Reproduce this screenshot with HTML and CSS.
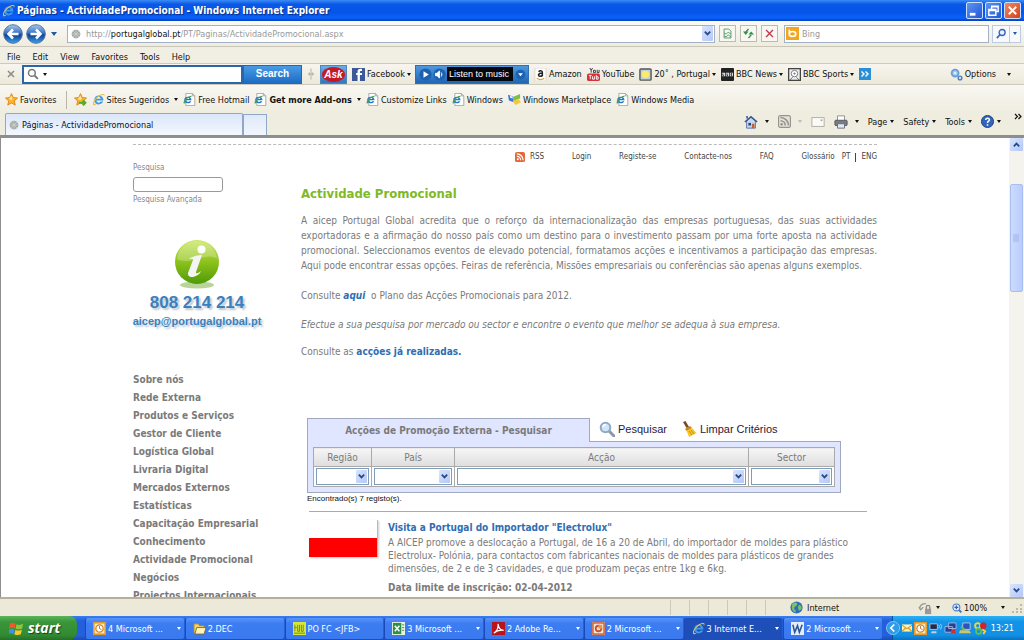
FILE: index.html
```html
<!DOCTYPE html>
<html lang="pt">
<head>
<meta charset="utf-8">
<title>Páginas - ActividadePromocional</title>
<link rel="stylesheet" href="styles.css">
</head>
<body>
<svg class="defs" aria-hidden="true">
  <defs>
    <linearGradient id="gGreen" x1="0" y1="0" x2="0" y2="1"><stop offset="0" stop-color="#c9e65a"/><stop offset=".5" stop-color="#8cc21c"/><stop offset="1" stop-color="#4f9a08"/></linearGradient>
    <linearGradient id="gNav" x1="0" y1="0" x2="0" y2="1"><stop offset="0" stop-color="#a9c8ee"/><stop offset=".45" stop-color="#3a72c4"/><stop offset=".55" stop-color="#123f93"/><stop offset="1" stop-color="#39a5ee"/></linearGradient>
    <symbol id="ie" viewBox="0 0 16 16"><path d="M14 9.300H5.500c.2 3 4 3.400 5.300 1.300h2.900C12 15.500 2.800 15.500 2.800 8.500 2.800 1.200 14.500 1.200 14 9.300zM5.500 7h5.300C10.400 4.300 5.900 4.300 5.500 7z" fill="#3f9bea"/><path d="M2 15C-2 11 9-.5 14.500 1.300 16 2 15.300 4 14.500 5c.3-1.500 0-2.400-1.200-2.400C9 2.600 2 10 2.500 13c.2 1 2 .8 3.200 0C4.500 14.800 3 15.600 2 15z" fill="#e9c04a"/></symbol>
    <symbol id="iedoc" viewBox="0 0 16 16"><path d="M3.500.5h8l3 3v12h-11z" fill="#fff" stroke="#9a9a9a"/><path d="M11.500.5v3h3" fill="none" stroke="#9a9a9a"/><path d="M10.500 9H4c.3 2.200 3 2.500 3.900 1h2.300C8.500 14 1.500 13.500 1.500 8.600c0-5.200 9.200-5.200 9 .4zM4 7.500h4C7.700 5.500 4.300 5.500 4 7.500z" fill="#2577c9"/><path d="M1 13C-1 10 7 2 11 3.500L10 5C7 4.500 2 9.500 3 12.500z" fill="#49a05a"/></symbol>
    <symbol id="globe" viewBox="0 0 16 16"><circle cx="8" cy="8" r="7" fill="#a5aaa5"/><path d="M1 8h14M8 1v14M3 3l10 10M13 3L3 13" fill="none" stroke="#d5d8d5" stroke-width="1"/></symbol>
    <symbol id="star" viewBox="0 0 16 16"><path d="M8 .8l2.200 4.800 5.200.6-3.900 3.500 1.100 5.200L8 12.300l-4.600 2.600 1.100-5.200L.6 6.200l5.200-.6z" fill="#fdb52b" stroke="#d77d10"/><path d="M8 3l1.300 3.500L8 9 5 7z" fill="#ffe795"/></symbol>
    <symbol id="chev" viewBox="0 0 10 10"><path d="M2 3l3 3 3-3" fill="none" stroke="#264a86" stroke-width="2"/></symbol>
    <symbol id="glass" viewBox="0 0 16 16"><path d="M10 10l5 5" stroke="#8b97a8" stroke-width="3" stroke-linecap="round"/><circle cx="6.500" cy="6.500" r="4.800" fill="#cfe6f8" stroke="#8fa9c4" stroke-width="2"/><path d="M4 6a3 3 0 013-2.500" stroke="#fff" stroke-width="1.500" fill="none"/></symbol>
    <symbol id="rss" viewBox="0 0 16 16"><circle cx="4.500" cy="11.500" r="1.600"/><path d="M3 7a6 6 0 016 6M3 3a10 10 0 0110 10" fill="none" stroke="currentColor" stroke-width="2"/></symbol>
    <symbol id="clock" viewBox="0 0 16 16"><rect width="16" height="16" rx="1" fill="#fbe9b8"/><rect x="1" y="1" width="14" height="14" fill="none" stroke="#e29a2f" stroke-width="2"/><circle cx="8" cy="8" r="4.500" fill="#fff" stroke="#d08020" stroke-width="1.500"/><path d="M8 5v3l2.500 1.500" fill="none" stroke="#a05c10"/></symbol>
  </defs>
</svg>

<header class="titlebar">
  <svg class="i12"><use href="#ie"/></svg>
  <h1 class="title">Páginas - ActividadePromocional - Windows Internet Explorer</h1>
  <div class="winbtns">
    <button class="wb" aria-label="Minimizar"><svg viewBox="0 0 16 16"><path d="M3 12h6" stroke="#fff" stroke-width="3"/></svg></button>
    <button class="wb" aria-label="Restaurar"><svg viewBox="0 0 16 16"><path d="M6 6V3.500h7V9h-2M3 7h7.500v6H3zM3 8h7M6 4h7" fill="none" stroke="#fff" stroke-width="1.500"/></svg></button>
    <button class="wb close" aria-label="Fechar"><svg viewBox="0 0 16 16"><path d="M4 4l8 8M12 4l-8 8" stroke="#fff" stroke-width="2"/></svg></button>
  </div>
</header>

<div class="addressrow">
  <button class="nav" aria-label="Voltar"><svg viewBox="0 0 20 20"><circle cx="10" cy="10" r="9.300" fill="url(#gNav)" stroke="#52749f"/><path d="M15.500 10H6M10 5.500L5.500 10l4.500 4.500" fill="none" stroke="#fff" stroke-width="2.500"/></svg></button>
  <button class="nav" aria-label="Avançar"><svg viewBox="0 0 20 20"><circle cx="10" cy="10" r="9.300" fill="url(#gNav)" stroke="#52749f"/><path d="M4.500 10H14M10 5.500l4.500 4.500-4.500 4.500" fill="none" stroke="#fff" stroke-width="2.500"/></svg></button>
  <span class="caret blue"></span>
  <div class="addr">
    <svg class="i10"><use href="#globe"/></svg>
    <span class="url">http://<b>portugalglobal.pt</b>/PT/Paginas/ActividadePromocional.aspx</span>
    <span class="dd"><svg><use href="#chev"/></svg></span>
  </div>
  <button class="sq" aria-label="Compatibilidade"><svg viewBox="0 0 16 16"><path d="M3 1.500h7l3 3v10H3zM3 7l3 2 3-3 4 3M3 11l3 2 3-3 4 3" fill="none" stroke="#4d9a62" stroke-width="1.300"/></svg></button>
  <button class="sq" aria-label="Atualizar"><svg viewBox="0 0 16 16"><path d="M8 1.500L4 6M8 14.500l4-4.500" fill="none" stroke="#2f9148" stroke-width="2"/><path d="M0 5h8L4 10zM16 9.500H8L12 5z" fill="#2f9148"/></svg></button>
  <button class="sq" aria-label="Parar"><svg viewBox="0 0 16 16"><path d="M3 3l10 10M13 3L3 13" stroke="#c23a4e" stroke-width="2"/></svg></button>
  <label class="bing"><svg viewBox="0 0 16 16"><rect width="16" height="16" fill="#f2a51f"/><path d="M4 3v7M4 8.500a4 3 0 118 0 4 3 0 11-8 0" fill="none" stroke="#fff" stroke-width="2"/></svg><input type="text" placeholder="Bing" aria-label="Bing"></label>
  <div class="go"><button aria-label="Procurar"><svg viewBox="0 0 16 16"><circle cx="9.500" cy="6" r="4" fill="#e6f0ff" stroke="#3465c0" stroke-width="1.800"/><path d="M6.500 9l-4 4.500" stroke="#3465c0" stroke-width="2.200"/></svg></button><button aria-label="Opções de procura"><span class="caret small-blue"></span></button></div>
</div>

<nav class="menubar"><button>File</button><button>Edit</button><button>View</button><button>Favorites</button><button>Tools</button><button>Help</button></nav>

<div class="toolbar">
  <button class="tx" aria-label="Fechar barra"><svg viewBox="0 0 10 10"><path d="M2 2l6 6M8 2L2 8" stroke="#8a8a8a" stroke-width="1.500"/></svg></button>
  <label class="askbox"><svg viewBox="0 0 16 16"><circle cx="6.500" cy="6.500" r="4.500" fill="none" stroke="#777" stroke-width="2"/><path d="M10 10l4.500 4.500" stroke="#777" stroke-width="2.500"/></svg><span class="caret"></span><input type="text" aria-label="Ask"></label>
  <button class="asksearch">Search</button>
  <svg class="grip" viewBox="0 0 10 16"><path d="M5 1v14M1 8h8M3 6v4M7 6v4" stroke="#a9a79d" fill="none"/></svg>
  <button class="asklogo"><span>Ask</span></button>
  <button class="tb"><svg class="i12" viewBox="0 0 14 14"><rect width="14" height="14" fill="#3b5998"/><path d="M8.500 14V7.500h2.300V5.300H8.500V4.200c0-.8.500-1 2.300-.9V1C7.500.6 6 1.500 6 4v1.300H4.500v2.200H6V14z" fill="#fff"/></svg>Facebook<span class="caret"></span></button>
  <div class="music"><svg viewBox="0 0 16 16"><circle cx="8" cy="8" r="7.500" fill="#1d61b1"/><path d="M5.500 4l6.500 4-6.500 4z" fill="#fff"/></svg><svg viewBox="0 0 16 16"><circle cx="8" cy="8" r="7.500" fill="#1d61b1"/><path d="M3 6.500h2l3-3v9l-3-3H3zM10 5.500c1.200 1.500 1.200 3.500 0 5" fill="#fff" stroke="#fff"/></svg><span>Listen to music</span><svg viewBox="0 0 16 16"><circle cx="8" cy="8" r="6" fill="#1d61b1"/><path d="M5 6.500h6L8 10z" fill="#fff"/></svg></div>
  <button class="tb"><svg class="i12" viewBox="0 0 14 14"><path d="M1 0h12v14H1z" fill="#fff" stroke="#d8d8d0"/><path d="M5 4c1-1.500 4-1.500 4 .5v4.500M9 5.500c-5 0-5 3.500-2.500 3.500C8 9 9 8 9 7" fill="none" stroke="#222" stroke-width="1.600"/><path d="M3 11c3 2 6 1.500 8 0" fill="none" stroke="#f19a20" stroke-width="1.300"/></svg>Amazon</button>
  <button class="tb"><svg class="i12" viewBox="0 0 14 14"><path d="M3 0l1.500 2.500L6 0M4.500 2.500V5M7 2.500h2V5H7zM11 2v3h2V2" fill="none" stroke="#333"/><rect y="6" width="14" height="8" rx="2" fill="#d9303a"/><path d="M2 8h3M3.500 8v4M6 9v3h2V9M10 7.500V12h2V9.500h-2" stroke="#fff" fill="none"/></svg>YouTube</button>
  <button class="tb"><svg class="i12" viewBox="0 0 14 14"><rect x="1" y="1" width="12" height="12" rx="1" fill="#b9d4e0" stroke="#555" stroke-width="1.500"/><circle cx="7" cy="7" r="4" fill="#ffe96b"/></svg>20˚ , Portugal<span class="caret"></span></button>
  <button class="tb"><svg class="i12" viewBox="0 0 14 14"><rect width="14" height="14" rx="1" fill="#222"/><path d="M1 5h3.500v4H1zM5.300 5h3.500v4H5.300zM9.600 5H13v4H9.600z" fill="#ddd"/><path d="M2 6v2h1M6.500 6v2h1M12 6h-1v2h1" stroke="#222" fill="none"/></svg>BBC News<span class="caret"></span></button>
  <button class="tb"><svg class="i12" viewBox="0 0 14 14"><rect x=".7" y=".7" width="12.600" height="12.600" fill="#eee" stroke="#444" stroke-width="1.400"/><circle cx="7" cy="6" r="3.500" fill="#fff" stroke="#777"/><path d="M7 4.500L8.500 6 7 7.500 5.500 6z" fill="#888"/><path d="M2 13l3-3M12 13L9 10" stroke="#666"/></svg>BBC Sports<span class="caret"></span></button>
  <button class="more" aria-label="Mais"><svg viewBox="0 0 12 12"><path d="M2.500 3.500L5 6 2.500 8.500M6.500 3.500L9 6 6.500 8.500" fill="none" stroke="#fff" stroke-width="1.400"/></svg></button>
  <button class="tb options"><svg class="i12" viewBox="0 0 14 14"><circle cx="5.500" cy="5.500" r="3.700" fill="#a9cdf0" stroke="#6b9fd6" stroke-width="2"/><circle cx="5.500" cy="5.500" r="1.200" fill="#eef6fd"/><circle cx="10.800" cy="10.800" r="2" fill="#d7e9fa" stroke="#4b7fbd" stroke-width="1.500"/></svg>Options<span class="caret wide"></span></button>
</div>

<nav class="favbar">
  <button class="tb"><svg class="i12"><use href="#star"/></svg>Favorites</button>
  <i class="sep"></i>
  <button class="tb" aria-label="Adicionar"><svg class="i12" viewBox="0 0 16 16"><use href="#star"/><path d="M6 12h8M11 9l3 3-3 3" fill="none" stroke="#4fae30" stroke-width="2.500"/></svg></button>
  <a class="fv" href="#"><svg class="i12"><use href="#ie"/></svg>Sites Sugeridos<span class="caret wide"></span></a>
  <a class="fv" href="#"><svg class="i12"><use href="#iedoc"/></svg>Free Hotmail</a>
  <a class="fv" href="#"><svg class="i12"><use href="#iedoc"/></svg><b>Get more Add-ons</b><span class="caret wide"></span></a>
  <a class="fv" href="#"><svg class="i12"><use href="#iedoc"/></svg>Customize Links</a>
  <a class="fv" href="#"><svg class="i12"><use href="#iedoc"/></svg>Windows</a>
  <a class="fv" href="#"><svg class="i12" viewBox="0 0 14 14"><path d="M0 2l6 2v6L1 8z" fill="#3f78d8"/><path d="M6 4l7-3v5L6 9z" fill="#7bc043"/><path d="M5 9l6-3 3 4-6 3z" fill="#f3c73f"/><path d="M2 3l3 1v2L2.500 5z" fill="#fff"/></svg>Windows Marketplace</a>
  <a class="fv" href="#"><svg class="i12"><use href="#iedoc"/></svg>Windows Media</a>
</nav>

<div class="tabrow">
  <button class="tab"><svg class="i10"><use href="#globe"/></svg>Páginas - ActividadePromocional</button>
  <button class="newtab" aria-label="Novo separador"></button>
  <div class="cmds">
    <button class="cm ic" aria-label="Página inicial"><svg class="i14" viewBox="0 0 16 16"><path d="M3 7v8h10V7L8 2.500z" fill="#c5d9f2" stroke="#4b6da2"/><path d="M1 8l7-6 7 6M3.500 4V1" fill="none" stroke="#39578a" stroke-width="1.800"/><path d="M9 10h3v5H9z" fill="#c6602f"/><path d="M5 9h3v3H5z" fill="#27477e"/></svg><span class="caret"></span></button>
    <button class="cm ic" aria-label="Feeds"><svg class="i12" viewBox="0 0 16 16"><rect x=".7" y=".7" width="14.600" height="14.600" rx="2" fill="#e4e2da" stroke="#96948c" stroke-width="1.400"/><g color="#96948c" fill="#96948c"><use href="#rss"/></g></svg><span class="caret dim"></span></button>
    <button class="cm" aria-label="Correio"><svg class="i14" viewBox="0 0 16 16"><rect x="1" y="3" width="14" height="10" fill="#fafaf7" stroke="#aaa89f"/><path d="M11 5h2v2h-2z" fill="#b8a090"/></svg></button>
    <button class="cm ic" aria-label="Imprimir"><svg class="i14" viewBox="0 0 16 16"><path d="M4 1h8v6H4z" fill="#fff" stroke="#888"/><rect x="1" y="6" width="14" height="6" rx="1" fill="#777b86" stroke="#555"/><path d="M4 10h8v5H4z" fill="#dfe8f5" stroke="#667"/></svg><span class="caret"></span></button>
    <button class="cm">Page<span class="caret"></span></button>
    <button class="cm">Safety<span class="caret"></span></button>
    <button class="cm">Tools<span class="caret"></span></button>
    <button class="cm" aria-label="Ajuda"><svg class="i12" viewBox="0 0 14 14"><circle cx="7" cy="7" r="6.500" fill="#3164bd" stroke="#173c80"/><path d="M5 5.500c0-3 4.500-2.500 4 0-.3 1.200-2 1.200-2 3M7 10v1.500" fill="none" stroke="#fff" stroke-width="1.600"/></svg><span class="caret"></span></button>
  </div>
  <svg class="over" viewBox="0 0 8 8"><path d="M1 1l2.500 2.500L1 6M4.500 1L7 3.500 4.500 6" fill="none" stroke="#111" stroke-width="1.200"/></svg>
</div>

<main class="viewport">
  <div class="scrollarea">
    <div class="page">
      <aside class="side">
        <label class="sl" for="q">Pesquisa</label>
        <input class="sq-in" id="q" type="text">
        <a class="adv" href="#">Pesquisa Avançada</a>
        <div class="contact">
          <svg class="info" viewBox="0 0 48 52"><ellipse cx="24" cy="47" rx="17" ry="3.500" fill="#a9c880" opacity=".8"/><circle cx="24" cy="24" r="22" fill="url(#gGreen)"/><path d="M4 21C6-3 42-3 44 21 34 13 18 28 4 21z" fill="#fff" opacity=".25"/><circle cx="28.500" cy="11.500" r="4" fill="#fff"/><path d="M17 20c4-2 8-3 12-3l-6 17c-.5 2 2 1.500 5-1-2 6-14 9-13 2l5-13c.4-1.500-2-1.500-4-1z" fill="#f4f4f4"/></svg>
          <strong class="phone">808 214 214</strong>
          <a class="mail" href="#">aicep@portugalglobal.pt</a>
        </div>
        <nav class="sidenav"><a href="#">Sobre nós</a><a href="#">Rede Externa</a><a href="#">Produtos e Serviços</a><a href="#">Gestor de Cliente</a><a href="#">Logística Global</a><a href="#">Livraria Digital</a><a href="#">Mercados Externos</a><a href="#">Estatísticas</a><a href="#">Capacitação Empresarial</a><a href="#">Conhecimento</a><a href="#">Actividade Promocional</a><a href="#">Negócios</a><a href="#">Projectos Internacionais</a></nav>
      </aside>
      <section class="content">
        <nav class="topnav">
          <a class="rss" href="#"><svg viewBox="0 0 16 16"><rect width="16" height="16" rx="3" fill="#e2683a"/><g color="#fff" fill="#fff"><use href="#rss"/></g></svg>RSS</a>
          <a href="#">Login</a><a href="#">Registe-se</a><a href="#">Contacte-nos</a><a href="#">FAQ</a>
          <span class="lang"><a href="#">Glossário</a><a href="#">PT</a><i></i><a href="#">ENG</a></span>
        </nav>
        <h2>Actividade Promocional</h2>
        <p class="intro">A aicep Portugal Global acredita que o reforço da internacionalização das empresas portuguesas, das suas actividades exportadoras e a afirmação do nosso país como um destino para o investimento passam por uma forte aposta na actividade promocional. Seleccionamos eventos de elevado potencial, formatamos acções e incentivamos a participação das empresas. Aqui pode encontrar essas opções. Feiras de referência, Missões empresariais ou conferências são apenas alguns exemplos.</p>
        <p class="line">Consulte <a class="lk it" href="#">aqui</a>&nbsp; o Plano das Acções Promocionais para 2012.</p>
        <p class="line em">Efectue a sua pesquisa por mercado ou sector e encontre o evento que melhor se adequa à sua empresa.</p>
        <p class="line">Consulte as <a class="lk" href="#">acções já realizadas.</a></p>

        <form class="finder">
          <div class="fhead">
            <h3>Acções de Promoção Externa - Pesquisar</h3>
            <button type="button" class="act"><svg><use href="#glass"/></svg>Pesquisar</button>
            <button type="button" class="act"><svg viewBox="0 0 16 16"><path d="M2 1l2.500-1L8 6 5.500 7z" fill="#7a4a22"/><path d="M4 8l5-3 2 2-5 3.500z" fill="#c9841c"/><path d="M5.500 9.500L11 7l4.500 5L8 16z" fill="#f6c526"/><path d="M8 10l3 4M10 9l3 4" stroke="#c98f10" fill="none"/></svg>Limpar Critérios</button>
          </div>
          <div class="fbody">
            <table>
              <thead><tr><th class="c1"><label for="s1">Região</label></th><th class="c2"><label for="s2">País</label></th><th><label for="s3">Acção</label></th><th class="c4"><label for="s4">Sector</label></th></tr></thead>
              <tbody><tr>
                <td><span class="sel"><select id="s1"><option></option></select><span class="dd"><svg><use href="#chev"/></svg></span></span></td>
                <td><span class="sel"><select id="s2"><option></option></select><span class="dd"><svg><use href="#chev"/></svg></span></span></td>
                <td><span class="sel"><select id="s3"><option></option></select><span class="dd"><svg><use href="#chev"/></svg></span></span></td>
                <td><span class="sel"><select id="s4"><option></option></select><span class="dd"><svg><use href="#chev"/></svg></span></span></td>
              </tr></tbody>
            </table>
          </div>
          <p class="found">Encontrado(s) 7 registo(s).</p>
        </form>
        <article class="item">
          <div class="flag"></div>
          <div>
            <h4><a href="#">Visita a Portugal do Importador "Electrolux"</a></h4>
            <p>A AICEP promove a deslocação a Portugal, de 16 a 20 de Abril, do importador de moldes para plástico Electrolux- Polónia, para contactos com fabricantes nacionais de moldes para plásticos de grandes dimensões, de 2 e de 3 cavidades, e que produzam peças entre 1kg e 6kg.</p>
            <strong>Data limite de inscrição: 02-04-2012</strong>
          </div>
        </article>
      </section>
    </div>
  </div>
  <div class="scrollbar"><span class="dd"><svg class="up"><use href="#chev"/></svg></span><span class="gap"></span><span class="thumb"><svg viewBox="0 0 7 8"><path d="M0 1h6M0 3h6M0 5h6M0 7h6" stroke="#9db3ea"/></svg></span><span class="dd last"><svg><use href="#chev"/></svg></span></div>
</main>

<footer class="status">
  <div class="cells"><i></i><i></i><i></i><i></i><i></i><i></i></div>
  <span class="zone"><svg class="i12" viewBox="0 0 16 16"><circle cx="8" cy="8" r="7.500" fill="#2f6fb5"/><path d="M3 3c3-2 6-1 6 1S5 7 5 9s3 2 2 5C3 13 1 9 3 3zM11 5c2 0 4 2 3 5l-3 2c-1-2-2-5 0-7z" fill="#7cc06a"/></svg>Internet</span>
  <span class="prot"><svg class="i14" viewBox="0 0 16 16"><path d="M2 9c0-4 3-6 7-6M1 7l2 3 3-3" fill="none" stroke="#999" stroke-width="1.500"/><rect x="8" y="9" width="7" height="6" fill="#999"/><path d="M9.500 9V7a2 2 0 014 0v2" fill="none" stroke="#888" stroke-width="1.500"/></svg><span class="caret"></span></span>
  <span class="zoom"><svg class="i10" viewBox="0 0 16 16"><path d="M10 10l5 5" stroke="#4670b8" stroke-width="3"/><circle cx="7" cy="7" r="5.500" fill="#e4f0ff" stroke="#4a7cc8" stroke-width="1.800"/><path d="M7 4v6M4 7h6" stroke="#2c5cb0" stroke-width="2"/></svg>100%<span class="caret"></span></span>
  <svg class="i10" viewBox="0 0 10 10"><path d="M8 1h2v2H8zM8 5h2v2H8zM4 5h2v2H4zM8 8h2v2H8zM4 8h2v2H4zM0 8h2v2H0z" fill="#bdb9a7"/></svg>
</footer>

<nav class="taskbar">
  <button class="start"><svg viewBox="0 0 16 16"><path d="M1 3c2-1.500 4-1.300 6 0L6 8C4 6.800 2.500 6.800 0 8z" fill="#ee5a2c"/><path d="M8 3.500c2 1 4 1 7-.5l-1 5c-2.500 1.300-4.500 1-7 .2z" fill="#8cc63f"/><path d="M0 9c2-1.200 4-1 6 0l-1 5c-2-1.200-3.500-1-6 0z" fill="#3f8ff0"/><path d="M6.800 9.500c2.500 1 4 1 7-.3l-1.200 5c-2.500 1.200-4.500 1-6.800.2z" fill="#fbc82b"/></svg>start</button>
  <div class="tasks">
    <button class="task"><svg class="i12"><use href="#clock"/></svg><span>4 Microsoft ...</span><i class="caret"></i></button>
    <button class="task"><svg class="i12" viewBox="0 0 14 14"><path d="M1 2h5l1 2h5v8H1z" fill="#f3d36a" stroke="#a8842c"/><path d="M4 6h10l-2 7H2z" fill="#fff3b8" stroke="#7c6a38"/></svg><span>2.DEC</span></button>
    <button class="task"><svg class="i12" viewBox="0 0 14 14"><rect width="14" height="14" fill="#d6e63a"/><path d="M2 3v7M2 6h2M5 3v7h2V3M9 3v7h2V3M1 12h12" stroke="#6e8c1c" fill="none"/></svg><span>PO FC &lt;JFB&gt;</span></button>
    <button class="task"><svg class="i12" viewBox="0 0 14 14"><rect width="14" height="14" fill="#e8f2e2"/><rect x="1" y="1" width="9" height="12" fill="#2f8f44"/><path d="M3 4l5 6M8 4l-5 6" stroke="#fff" stroke-width="1.600"/><path d="M11 3h2M11 6h2M11 9h2" stroke="#2f8f44"/></svg><span>3 Microsoft ...</span><i class="caret"></i></button>
    <button class="task"><svg class="i12" viewBox="0 0 14 14"><rect width="14" height="14" fill="#b8141b"/><path d="M2 12C6 9 7 5 6.500 2 7 7 9 9 12.500 9 8 8.300 5 9.500 2 12z" fill="none" stroke="#fff" stroke-width="1.300"/></svg><span>2 Adobe Re...</span><i class="caret"></i></button>
    <button class="task"><svg class="i12" viewBox="0 0 14 14"><rect width="14" height="14" fill="#f6e2d6"/><rect x="1" y="1" width="12" height="12" fill="none" stroke="#c9552c" stroke-width="1.500"/><circle cx="7" cy="7" r="3" fill="none" stroke="#c9552c" stroke-width="2"/><path d="M7 7V3h4v4z" fill="#e9964a"/></svg><span>2 Microsoft ...</span><i class="caret"></i></button>
    <button class="task active"><svg class="i12"><use href="#ie"/></svg><span>3 Internet E...</span><i class="caret"></i></button>
    <button class="task"><svg class="i12" viewBox="0 0 14 14"><rect width="14" height="14" fill="#e6edf8"/><path d="M2 3l2 8 3-7 2 7 3-8" fill="none" stroke="#2b579a" stroke-width="1.700"/></svg><span>2 Microsoft ...</span><i class="caret"></i></button>
  </div>
  <div class="tray">
    <svg class="hide" viewBox="0 0 16 16"><circle cx="8" cy="8" r="7.500" fill="#2f9bea" stroke="#86c9f6"/><path d="M9.500 4L5.500 8l4 4" fill="none" stroke="#fff" stroke-width="2"/></svg>
    <svg class="i10" viewBox="0 0 14 14"><rect y="2" width="14" height="10" fill="#fff0b0"/><path d="M0 3l7 5 7-5M0 12l5-5M14 12L9 7" fill="none" stroke="#d69a28" stroke-width="1.500"/></svg>
    <svg class="i12"><use href="#clock"/></svg>
    <svg class="i12" viewBox="0 0 14 14"><path d="M1 2h8v6H1z" fill="#1d2c4f" stroke="#b9c4d8"/><path d="M3 10h5v2H2z" fill="#ccd"/><path d="M10.500 3q1.500 2 0 4M12.500 2q2 3 0 6" fill="none" stroke="#9ed0ff"/></svg>
    <svg class="i12" viewBox="0 0 14 14"><path d="M5 1h8v6H5zM1 5h8v6H1z" fill="#273e94" stroke="#a8b4d8"/><path d="M8 8l4 4M12 8l-4 4" stroke="#d02a35" stroke-width="1.600"/></svg>
    <svg class="i12" viewBox="0 0 14 14"><path d="M4 1h8v7H4z" fill="#2a55c0" stroke="#b8c8e8"/><path d="M1 9h10l2 3H0z" fill="#cfc46a"/><path d="M2 5l4 3" stroke="#5fc04d" stroke-width="2"/></svg>
    <svg class="i12" viewBox="0 0 14 14"><circle cx="4" cy="4" r="2.800" fill="none" stroke="#f5d63a" stroke-width="2"/><circle cx="5" cy="10" r="2.800" fill="none" stroke="#60c048" stroke-width="2"/><circle cx="10" cy="4" r="3.500" fill="#d8202c"/><path d="M9 8l3 2-2 3" fill="none" stroke="#f5d63a" stroke-width="2"/></svg>
    <time>13:21</time>
  </div>
</nav>
</body>
</html>
```

FILE: styles.css
```css
* { box-sizing: border-box; }
html, body { height: 100%; }
body {
  margin: 0;
  display: flex;
  flex-direction: column;
  overflow: hidden;
  background: #ece9d8;
  color: #111;
  font: 9px/12px "DejaVu Sans Condensed", "DejaVu Sans", sans-serif;
}
button, input, select { font: inherit; color: inherit; margin: 0; padding: 0; border: 0; background: none; border-radius: 0; }
a { color: inherit; text-decoration: none; }
h1, h2, h3, h4, p { margin: 0; }
svg { display: block; flex: none; }
.defs { position: absolute; width: 0; height: 0; }
.i10 { width: 10px; height: 10px; }
.i12 { width: 13px; height: 13px; }
.i14 { width: 14px; height: 14px; }
.caret { flex: none; width: 0; border: 2px solid transparent; border-top: 3px solid #111; border-bottom: 0; }
.caret.blue { border-width: 3px 3px 0; border-top: 4px solid #245a9c; }
.caret.small-blue { border-top-color: #245a9c; }
.caret.wide { margin-left: 3px; }
.caret.dim { border-top-color: #bbb; }

.titlebar { flex: none; display: flex; align-items: center; gap: 2px; height: 21px; padding: 0 3px 0 2px; background: linear-gradient(#3c8cf8, #0a58e6 20%, #0655ea 60%, #0a62fb 85%, #0340c0); color: #fff; }
.title { flex: 1; font: bold 10px/14px "DejaVu Sans Condensed", sans-serif; text-shadow: 1px 1px 1px #0a2c80; }
.winbtns { display: flex; gap: 2px; }
.wb { width: 17px; height: 17px; border: 1px solid #cfe0fb; border-radius: 2px; background: linear-gradient(135deg, #5f93f3, #2257d5); }
.wb.close { background: linear-gradient(135deg, #ee8a68, #d2401c); }

.addressrow { flex: none; display: flex; align-items: center; height: 26px; padding: 0 3px; background: linear-gradient(#fbfaf7, #efecdf); border-bottom: 1px solid #c9c6b8; }
.nav { width: 20px; height: 20px; margin-right: 3px; }
.nav svg { width: 20px; height: 20px; }
.addressrow > .caret { margin: 0 10px 0 2px; }
.addr { flex: 1; display: flex; align-items: center; gap: 5px; height: 18px; padding: 0 1px 0 3px; border: 1px solid #a2b2c4; background: #fff; }
.url { flex: 1; color: #999; }
.url b { font-weight: normal; color: #111; }
.dd { display: flex; align-items: center; justify-content: center; width: 11px; height: 13px; border-radius: 1px; background: linear-gradient(135deg, #d8e4ff, #b4c8f6); }
.dd svg { width: 9px; height: 9px; }
.addr .dd { height: 15px; }
.sq { width: 17px; height: 17px; margin-left: 4px; padding: 2px; border: 1px solid #bdbab0; background: #f8f7f2; }
.bing { display: flex; align-items: center; gap: 3px; width: 205px; height: 18px; margin-left: 6px; padding: 0 1px; border: 1px solid #a2b2c4; background: #fff; }
.bing svg { width: 13px; height: 13px; }
.bing input { flex: 1; min-width: 0; outline: 0; }
.bing input::placeholder { color: #999; }
.go { display: flex; margin-left: 3px; border: 1px solid #bccbe0; background: #f7f9fd; }
.go button { display: flex; align-items: center; justify-content: center; width: 16px; height: 16px; }
.go button + button { width: 11px; border-left: 1px solid #bccbe0; }
.go svg { width: 12px; height: 12px; }

.menubar { flex: none; display: flex; align-items: center; gap: 12px; height: 16px; padding: 3px 7px 0; background: #f1eee3; }

.toolbar { flex: none; display: flex; align-items: center; height: 22px; padding: 0 4px; border-top: 1px solid #cdcabc; border-bottom: 1px solid #cdcabc; background: linear-gradient(#f7f5ee, #ece9da); }
.tx { width: 14px; height: 10px; margin-right: 4px; }
.tx svg { width: 14px; height: 10px; }
.askbox { display: flex; align-items: center; gap: 4px; width: 221px; height: 19px; padding-left: 3px; border: 2px solid #2b66a8; background: #fff; }
.askbox svg { width: 12px; height: 12px; }
.askbox input { flex: 1; min-width: 0; outline: 0; }
.asksearch { width: 59px; height: 19px; background: linear-gradient(#4a9be6, #1c6cc4); border: 1px solid #2b66a8; color: #fff; font: bold 10px/14px "Liberation Sans", sans-serif; }
.grip { width: 8px; height: 16px; margin: 0 5px; }
.asklogo { width: 27px; height: 19px; padding: 1px; border: 1px solid #4c86bd; background: linear-gradient(#6aaee4, #2f78c0); }
.asklogo span { display: block; border-radius: 50%; background: #c4182a; color: #fff; font: italic bold 10px/15px "Liberation Sans", sans-serif; }
.tb, .fv, .cm { display: flex; align-items: center; gap: 2px; white-space: nowrap; }
.tb { margin-left: 5px; }
.music { display: flex; align-items: center; gap: 1px; height: 19px; margin-left: 4px; padding: 0 1px 0 3px; border: 1px solid #2e6fb5; background: linear-gradient(#4f98dd, #1f66b4); color: #fff; }
.music svg { width: 13px; height: 13px; }
.music span { padding: 1px 4px 1px 2px; background: #05070e; font: 9px/12px "Liberation Sans", sans-serif; }
.more { display: flex; align-items: center; justify-content: center; width: 12px; height: 12px; margin-left: 5px; background: #2b8fd8; }
.more svg { width: 12px; height: 12px; }
.options { margin-left: auto; margin-right: 9px; }
.options .caret { margin-left: 9px; }

.favbar { flex: none; display: flex; align-items: center; gap: 5px; height: 27px; padding: 2px 0 0 5px; background: linear-gradient(#f8f7f1, #f0ede0); }
.favbar .tb { margin: 0; }
.sep { width: 1px; height: 18px; margin: 0 2px 0 4px; background: #b9b6a8; }

.tabrow { flex: none; display: flex; align-items: flex-end; height: 26px; padding: 0 2px 0 5px; border-bottom: 3px solid #8e8e8c; background: #efece0; }
.tab { display: flex; align-items: center; gap: 3px; width: 238px; height: 22px; padding: 0 3px; border: 1px solid #91a7c8; border-bottom: 0; border-radius: 2px 2px 0 0; background: linear-gradient(#dae6fa, #f4f8fe); }
.newtab { width: 24px; height: 21px; border: 1px solid #91a7c8; border-bottom: 0; background: linear-gradient(#dfe9fa, #f2f6fd); }
.cmds { display: flex; align-items: center; gap: 9px; height: 27px; margin-left: auto; }
.cm { gap: 3px; }
.cm.ic { gap: 7px; }
.over { width: 8px; height: 8px; margin: 0 0 14px 13px; }

.viewport { flex: 1; min-height: 0; display: flex; border-left: 1px solid #8e8e8c; background: #fff; }
.scrollarea { flex: 1; overflow: hidden; }
.page { display: grid; grid-template-columns: 168px 1fr; max-width: 744px; margin: 6px auto 0; border-top: 1px dashed #bbb; color: #7a7a7a; }
.side { display: flex; flex-direction: column; align-items: flex-start; padding-top: 17px; }
.sl, .adv { font-size: 8px; line-height: 12px; color: #888; }
.sq-in { width: 90px; height: 15px; margin: 3px 0 2px; border: 1px solid #999; border-radius: 3px; }
.contact { display: flex; flex-direction: column; align-items: center; width: 128px; margin-top: 32px; font-family: "Liberation Sans", sans-serif; font-weight: bold; color: #3a80bc; text-shadow: 2px 2px 2px #b8c4d0; }
.info { width: 48px; height: 52px; }
.phone { font-size: 17px; line-height: 22px; margin-top: 2px; }
.mail { font-size: 11px; line-height: 14px; }
.sidenav { display: flex; flex-direction: column; margin-top: 43px; font: bold 10px/18px "DejaVu Sans Condensed", sans-serif; white-space: nowrap; }
.content { min-width: 0; font: 10px/15px "DejaVu Sans Condensed", sans-serif; }
.topnav { display: flex; align-items: center; justify-content: space-between; padding: 5px 0 0 214px; font-size: 8px; line-height: 14px; color: #444; }
.rss, .lang { display: flex; align-items: center; gap: 5px; }
.rss svg { width: 10px; height: 10px; }
.lang { gap: 7px; }
.lang i { width: 1px; height: 9px; margin: 0 -2px; background: #444; }
h2 { margin-top: 21px; font-size: 13px; line-height: 18px; color: #7fb928; }
.intro { margin-top: 10px; text-align: justify; }
.line { margin-top: 15px; }
.line + .line { margin-top: 14px; }
.line.em { font-style: italic; }
.line.em + .line { margin-top: 12px; }
.lk { color: #2f6eb2; font-weight: bold; }
.it { font-style: italic; }
.finder { width: 534px; margin: 59px 0 0 6px; }
.fhead { display: flex; align-items: flex-start; }
.fhead h3 { position: relative; width: 283px; height: 24px; margin-bottom: -1px; border: 1px solid #a0a8c0; border-bottom: 0; background: #e0e6ff; text-align: center; font-size: 10px; line-height: 24px; }
.act { display: flex; align-items: center; gap: 3px; height: 21px; margin-left: 9px; color: #2c1838; font: 11px/14px "Liberation Sans", sans-serif; }
.act + .act { margin-left: 14px; }
.act svg { width: 16px; height: 16px; }
.fbody { padding: 5px; border: 1px solid #a0a8c0; background: #e0e6ff; }
table { width: 100%; table-layout: fixed; border-collapse: collapse; background: #fff; }
th, td { border: 1px solid #aaa; padding: 0; }
th { height: 19px; background: linear-gradient(#f6f6f6, #dedede); font-weight: normal; }
td { padding: 1px 2px; }
.c1 { width: 58px; }
.c2 { width: 83px; }
.c4 { width: 86px; }
.sel { display: grid; align-items: center; }
.sel > * { grid-area: 1 / 1; }
.sel select { width: 100%; height: 17px; border: 1px solid #7f9db9; background: #fff; appearance: none; }
.sel .dd { justify-self: end; margin-right: 2px; height: 13px; pointer-events: none; }
.found { font: 8px/12px "Liberation Sans", sans-serif; color: #111; }
.item { display: grid; grid-template-columns: 69px 1fr; gap: 10px; margin: 6px 10px 0 8px; padding-top: 8px; border-top: 1px solid #aaa; }
.flag { height: 37px; border-right: 1px solid #bbb; background: linear-gradient(#fff 50%, #fe0000 50%); box-shadow: 1px 1px 2px #ccc; }
.item h4 { font-size: 10px; line-height: 16px; color: #2f6eb2; }
.item p { line-height: 13px; }
.item strong { display: block; margin-top: 5px; line-height: 16px; }

.scrollbar { display: flex; flex-direction: column; align-items: center; width: 15px; background: #f4f3ee; }
.scrollbar .dd { width: 13px; }
.up { transform: rotate(180deg); }
.gap { height: 33px; }
.thumb { display: flex; align-items: center; justify-content: center; width: 13px; height: 108px; border: 1px solid #a8bdf0; border-radius: 2px; background: linear-gradient(90deg, #cddbff, #b9ccfb); }
.thumb svg { width: 7px; height: 8px; }
.last { margin-top: auto; }

.status { flex: none; display: flex; align-items: center; height: 19px; padding-right: 2px; border-top: 2px solid #b5b09c; background: #ece9d8; }
.cells { display: flex; gap: 18px; margin-left: auto; }
.cells i { width: 1px; height: 15px; background: #cdc9b8; }
.zone, .prot, .zoom { display: flex; align-items: center; gap: 4px; }
.zone { width: 118px; margin-left: 24px; }
.prot { width: 34px; margin-left: 10px; }
.zoom { gap: 2px; width: 60px; }
.zoom .caret { margin-left: 12px; }

.taskbar { flex: none; display: flex; height: 24px; background: linear-gradient(#3a80f0, #245edb 20%, #2560dc 80%, #1c4bb4); color: #fff; }
.start { display: flex; align-items: center; gap: 4px; width: 77px; padding-left: 9px; border-radius: 0 8px 8px 0; background: linear-gradient(#5cb35c, #3a963a 25%, #328a32 80%, #276f27); color: #fff; font: italic bold 14px/18px "Open Sans", "Noto Sans", sans-serif; text-shadow: 1px 1px 1px #174517; }
.start svg { width: 15px; height: 15px; }
.tasks { flex: 1; display: grid; grid-template-columns: repeat(8, 1fr); gap: 1px; padding: 2px 10px 1px 8px; }
.task { display: flex; align-items: center; gap: 2px; min-width: 0; padding: 0 3px 0 7px; border-left: 1px solid #1c49b5; border-radius: 2px; background: linear-gradient(#5a94fa, #3c7df2 25%, #3a78ee); color: #fff; white-space: nowrap; }
.task span { flex: 1; text-align: left; }
.task .caret { border-top-color: #fff; }
.task.active { background: #1e4fb8; }
.tray { display: flex; align-items: center; gap: 2px; width: 132px; padding-right: 10px; background: linear-gradient(#2bb0f4, #1294e8 25%, #1190e4 80%, #0c70c0); border-left: 1px solid #0a50a0; }
.hide { width: 14px; height: 14px; margin-left: -7px; }
.tray time { margin-left: auto; }
```
